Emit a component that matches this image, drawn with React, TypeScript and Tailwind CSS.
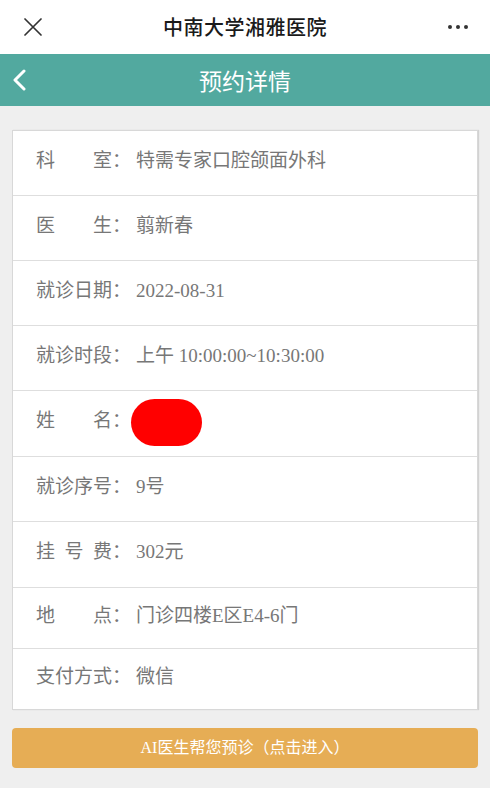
import React from 'react';

type Row = {
  label: string;
  value?: string;
  spaced?: boolean;
  redacted?: boolean;
  h: string;
};

const ROWS: Row[] = [
  { label: '科室', value: '特需专家口腔颌面外科', spaced: true, h: 'h-[65px]' },
  { label: '医生', value: '翦新春', spaced: true, h: 'h-[65px]' },
  { label: '就诊日期', value: '2022-08-31', h: 'h-[65px]' },
  { label: '就诊时段', value: '上午 10:00:00~10:30:00', h: 'h-[65px]' },
  { label: '姓名', spaced: true, redacted: true, h: 'h-[66px]' },
  { label: '就诊序号', value: '9号', h: 'h-[65px]' },
  { label: '挂号费', value: '302元', spaced: true, h: 'h-[66px]' },
  { label: '地点', value: '门诊四楼E区E4-6门', spaced: true, h: 'h-[61px]' },
  { label: '支付方式', value: '微信', h: 'h-[60px]' },
];

export default function App() {
  return (
    <div className="w-[490px] h-[788px] bg-[#efefef] overflow-hidden font-['Liberation_Serif','Noto_Sans_CJK_SC',serif]">
      {/* WeChat top bar */}
      <div className="h-[54px] bg-white flex items-center justify-between px-[24px]">
        <svg width="18" height="18" viewBox="0 0 18 18" className="text-[#333]">
          <path d="M1 1 L17 17 M17 1 L1 17" stroke="currentColor" strokeWidth="1.7" strokeLinecap="round" />
        </svg>
        <div className="font-['Noto_Sans_CJK_SC',sans-serif] font-medium text-[20px] text-[#1a1a1a] tracking-[0.5px]">
          中南大学湘雅医院
        </div>
        <div className="flex gap-[4px] items-center w-[20px] -mr-[2px]">
          <span className="w-[4px] h-[4px] rounded-full bg-[#333]" />
          <span className="w-[4px] h-[4px] rounded-full bg-[#333]" />
          <span className="w-[4px] h-[4px] rounded-full bg-[#333]" />
        </div>
      </div>

      {/* Teal header */}
      <div className="h-[52px] bg-[#52a99f] flex items-center relative">
        <svg width="16" height="22" viewBox="0 0 16 22" className="absolute left-[11px] top-[15px]">
          <path d="M13 2 L4 11 L13 20" fill="none" stroke="white" strokeWidth="3" strokeLinecap="round" strokeLinejoin="round" />
        </svg>
        <div className="flex-1 text-center text-white text-[23px] font-['Noto_Sans_CJK_SC',sans-serif]">
          预约详情
        </div>
      </div>

      {/* Detail card */}
      <div className="mt-[24px] mx-[12px] bg-white border border-[#d8d8d8] shadow-[1px_0_1px_rgba(0,0,0,0.12)]">
        {ROWS.map((r, i) => (
          <div
            key={r.label}
            className={`${r.h} flex items-center pl-[23px] pb-[4px] text-[19px] text-[#777] ${
              i < ROWS.length - 1 ? 'border-b border-[#dedede]' : ''
            }`}
          >
            {r.spaced ? (
              <span className="w-[76px] [text-align-last:justify] shrink-0">{r.label}</span>
            ) : (
              <span className="shrink-0">{r.label}</span>
            )}
            <span className="shrink-0">：</span>
            {r.redacted ? (
              <div className="ml-0 mt-[2px] w-[71px] h-[47px] rounded-full bg-[#ff0000]" />
            ) : (
              <span className="ml-[5px]">{r.value}</span>
            )}
          </div>
        ))}
      </div>

      {/* AI button */}
      <div className="mt-[18px] mx-[12px] h-[40px] rounded-[4px] bg-[#e6ad55] flex items-center justify-center text-white text-[16px]">
        AI医生帮您预诊（点击进入）
      </div>
    </div>
  );
}
